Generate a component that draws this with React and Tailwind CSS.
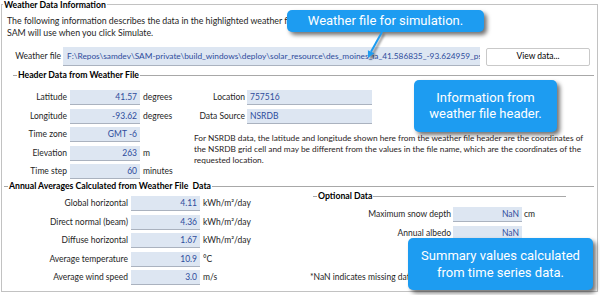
const line = "h-px bg-[#a8a8a8]";

function Box({ children, className = "", left = false }) {
  return (
    <div
      className={`h-[15px] shrink-0 border-b border-[#aab2bf] bg-[#dde6f2] px-[3px] leading-[14px] text-[#2d4c9c] ${
        left ? "text-left" : "text-right"
      } ${className}`}
    >
      {children}
    </div>
  );
}

function GroupTitle({ children, className = "" }) {
  return (
    <div className={`flex h-[10px] items-center ${className}`}>
      <div className={`w-[4px] ${line}`} />
      <span className="px-[1px] text-[8.7px] font-bold text-black">{children}</span>
      <div className={`flex-1 ${line}`} />
    </div>
  );
}

function Row({ label, value, unit, labelW, boxW, gap = "gap-[3px]" }) {
  return (
    <div className={`flex h-[15px] items-center ${gap}`}>
      <div className={`${labelW} shrink-0 whitespace-nowrap text-right`}>{label}</div>
      <Box className={boxW}>{value}</Box>
      {unit ? <div className="whitespace-nowrap">{unit}</div> : null}
    </div>
  );
}

function Callout({ children, className }) {
  return (
    <div
      className={`absolute flex flex-col items-center justify-center rounded-[5px] bg-[#1d9cf1] text-center font-['Roboto',sans-serif] text-[13px] leading-[16px] text-white shadow-[3px_3px_4px_rgba(0,0,0,0.55)] ${className}`}
    >
      {children}
    </div>
  );
}

const headerRows = [
  ["Latitude", "41.57", "degrees"],
  ["Longitude", "-93.62", "degrees"],
  ["Time zone", "GMT -6", ""],
  ["Elevation", "263", "m"],
  ["Time step", "60", "minutes"],
];

const annualRows = [
  ["Global horizontal", "4.11", "kWh/m²/day"],
  ["Direct normal (beam)", "4.36", "kWh/m²/day"],
  ["Diffuse horizontal", "1.67", "kWh/m²/day"],
  ["Average temperature", "10.9", "°C"],
  ["Average wind speed", "3.0", "m/s"],
];

export default function App() {
  return (
    <div className="relative h-[295px] w-[600px] overflow-hidden bg-white font-['Lato',sans-serif] text-[8.5px] text-[#1e1e1e]">
      <div className="relative ml-[1px] mt-[4px] h-[288px] w-[597px] border border-[#c2c2c2]">
        <div className="absolute -top-[6px] left-[1px] bg-white px-[1px] text-[8.7px] font-bold leading-[11px] text-black">
          Weather Data Information
        </div>

        <p className="ml-[5px] mt-[10px] whitespace-nowrap text-[8.8px] leading-[12px]">
          The following information describes the data in the highlighted weather file from the list above. This is the file
          <br />
          SAM will use when you click Simulate.
        </p>

        <div className="mt-[8px] flex h-[19px] items-center">
          <div className="w-[61px] shrink-0 pr-[2px] text-right">Weather file</div>
          <div className="h-[19px] w-[417px] shrink-0 overflow-hidden whitespace-nowrap border-b border-[#aab2bf] bg-[#dde6f2] px-[4px] text-[8.3px] leading-[18px] text-[#2d4c9c]">
            F:\Repos\samdev\SAM-private\build_windows\deploy\solar_resource\des_moines_ia_41.586835_-93.624959_psmv3_60_tmy.csv
          </div>
          <button className="ml-[6px] h-[18px] w-[104px] rounded-[2px] border border-[#c9c9c9] bg-white text-[8.5px] text-black">
            View data...
          </button>
        </div>

        <GroupTitle className="ml-[11px] mr-[3px] mt-[4px]">Header Data from Weather File</GroupTitle>

        <div className="mt-[10px] flex">
          <div className="flex w-[192px] shrink-0 flex-col gap-[3.5px]">
            {headerRows.map(([l, v, u]) => (
              <Row key={l} label={l} value={v} unit={u} labelW="w-[65px]" boxW="w-[70px]" />
            ))}
          </div>
          <div className="flex flex-col">
            <div className="flex flex-col gap-[3.5px]">
              <div className="flex h-[15px] items-center gap-[2px]">
                <div className="w-[51px] whitespace-nowrap text-right">Location</div>
                <Box left className="w-[125px]">757516</Box>
              </div>
              <div className="flex h-[15px] items-center gap-[2px]">
                <div className="w-[51px] whitespace-nowrap text-right">Data Source</div>
                <Box left className="w-[125px]">NSRDB</Box>
              </div>
            </div>
            <p className="mt-[9px] whitespace-nowrap text-[8.3px] leading-[11px] text-[#2a1c1c]">
              For NSRDB data, the latitude and longitude shown here from the weather file header are the coordinates of
              <br />
              the NSRDB grid cell and may be different from the values in the file name, which are the coordinates of the
              <br />
              requested location.
            </p>
          </div>
        </div>

        <GroupTitle className="ml-[2px] mr-[3px] mt-[2px]">Annual Averages Calculated from Weather File&nbsp; Data</GroupTitle>

        <div className="mt-[5px] flex">
          <div className="flex w-[308px] shrink-0 flex-col gap-[3.5px]">
            {annualRows.map(([l, v, u]) => (
              <Row key={l} label={l} value={v} unit={u} labelW="w-[126px]" boxW="w-[69px]" />
            ))}
          </div>
          <div className="-mt-[5px] flex flex-1 flex-col">
            <GroupTitle className="ml-[3px] mr-[31px]">Optional Data</GroupTitle>
            <div className="mt-[6px] flex flex-col gap-[3.5px]">
              <Row label="Maximum snow depth" value="NaN" unit="cm" labelW="w-[141px]" boxW="w-[69px]" gap="gap-[2px]" />
              <Row label="Annual albedo" value="NaN" labelW="w-[141px]" boxW="w-[69px]" gap="gap-[2px]" />
            </div>
            <div className="mt-[31px] leading-[11px]">*NaN indicates missing data.</div>
          </div>
        </div>
      </div>

      <Callout className="left-[287px] top-[10px] h-[22px] w-[197px]">Weather file for simulation.</Callout>
      <svg
        className="absolute left-[355px] top-[28px] drop-shadow-[2px_2px_1px_rgba(0,0,0,0.45)]"
        width="35"
        height="35"
        viewBox="0 0 35 35"
      >
        <line x1="27" y1="4" x2="16" y2="23.7" stroke="#1d9cf1" strokeWidth="2" />
        <polygon points="13,30 19.2,25.2 12.9,22.2" fill="#1d9cf1" />
      </svg>
      <Callout className="left-[414px] top-[80px] h-[52px] w-[143px]">
        <span>Information from</span>
        <span>weather file header.</span>
      </Callout>
      <Callout className="left-[408px] top-[238px] h-[52px] w-[185px] leading-[17px]">
        <span>Summary values calculated</span>
        <span>from time series data.</span>
      </Callout>
    </div>
  );
}
